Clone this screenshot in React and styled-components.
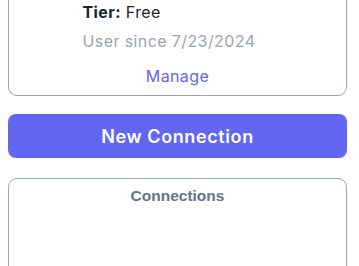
import React from 'react';
import styled, { createGlobalStyle } from 'styled-components';

const GlobalStyle = createGlobalStyle`
  html, body {
    margin: 0;
    padding: 0;
    background: #fff;
    font-family: Inter, "Noto Sans", sans-serif;
    overflow: hidden;
  }
`;

const Page = styled.div`
  width: 339px;
  padding-left: 8px;
  display: flex;
  flex-direction: column;
`;

/* top of the account card sits above the visible area */
const AccountCard = styled.div`
  margin-top: -22px;
  padding: 21px 16px 7px;
  border: 1px solid #9aa5b6;
  border-radius: 9px;
  display: flex;
  flex-direction: column;
  align-items: center;
`;

const Info = styled.div`
  width: 190px;
  display: flex;
  flex-direction: column;
  gap: 5px;
`;

const Line = styled.div`
  font-size: 16px;
  line-height: 24px;
  color: ${p => (p.muted ? '#9ca3b4' : '#1e2330')};
  letter-spacing: 0.4px;
  white-space: nowrap;
`;

const Label = styled.span`
  font-weight: 700;
`;

const ManageLink = styled.a`
  margin-top: 11px;
  font-size: 16px;
  line-height: 24px;
  color: #6366f1;
  letter-spacing: 0.4px;
  cursor: pointer;
`;

const PrimaryButton = styled.button`
  margin-top: 18px;
  height: 44px;
  border: none;
  border-radius: 8px;
  background: #6366f1;
  color: #fff;
  font-family: Inter, "Noto Sans", sans-serif;
  font-size: 18px;
  font-weight: 600;
  letter-spacing: 0.6px;
  cursor: pointer;
`;

const ConnectionsCard = styled.div`
  margin-top: 20px;
  height: 160px;
  border: 1px solid #9aa5b6;
  border-radius: 9px;
  padding-top: 6px;
  display: flex;
  flex-direction: column;
  align-items: center;
`;

const CardTitle = styled.div`
  font-family: "Liberation Sans", Arial, sans-serif;
  font-size: 15.5px;
  font-weight: 700;
  color: #64748b;
  line-height: 22px;
`;

export default function App() {
  return (
    <>
      <GlobalStyle />
      <Page>
        <AccountCard>
          <Info>
            <Line>
              <Label>Tier:</Label> Free
            </Line>
            <Line muted>User since 7/23/2024</Line>
          </Info>
          <ManageLink>Manage</ManageLink>
        </AccountCard>
        <PrimaryButton>New Connection</PrimaryButton>
        <ConnectionsCard>
          <CardTitle>Connections</CardTitle>
        </ConnectionsCard>
      </Page>
    </>
  );
}
